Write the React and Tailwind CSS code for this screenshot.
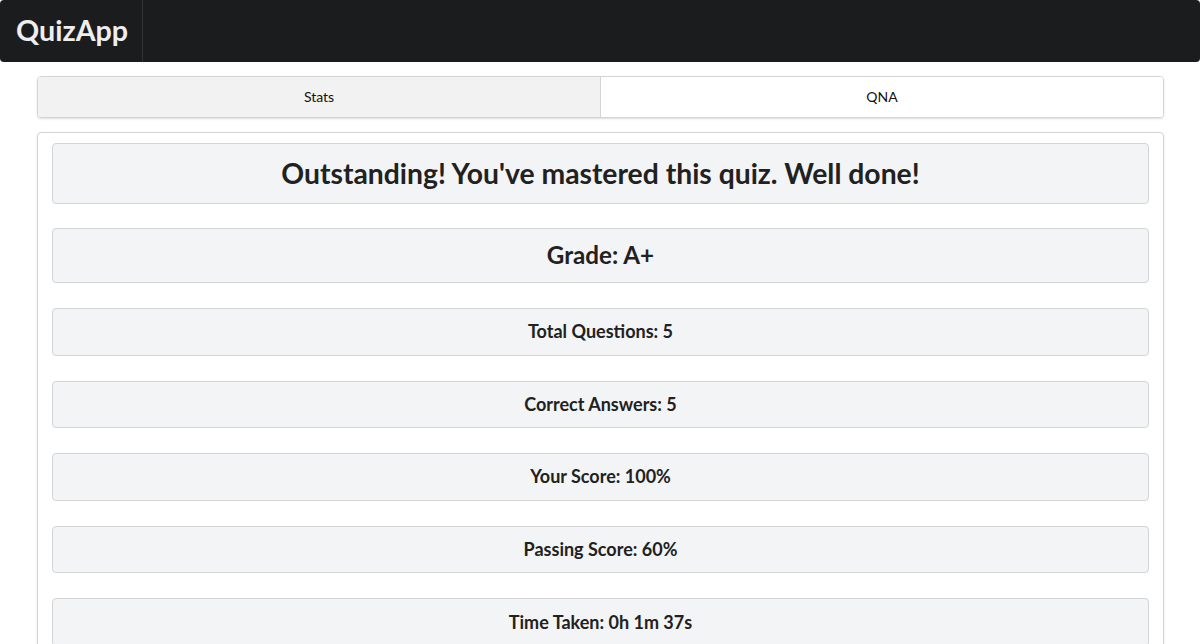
import React from 'react';

const stats = [
  { label: 'Total Questions: 5' },
  { label: 'Correct Answers: 5' },
  { label: 'Your Score: 100%' },
  { label: 'Passing Score: 60%' },
  { label: 'Time Taken: 0h 1m 37s' },
];

const StatRow = ({ children }) => (
  <div className="h-[47.6px] mt-[25px] flex items-center justify-center rounded-[4px] border border-[#d4d4d5] bg-[#f3f4f5] text-[18px] font-bold text-[#212121]">
    {children}
  </div>
);

const App = () => {
  return (
    <div className="min-h-[644px] bg-white font-['Lato','Liberation_Sans',sans-serif] text-[#212121]">
      {/* top bar */}
      <div className="h-[62px] flex bg-[#1b1c1d] rounded-[4px]">
        <div className="flex items-center px-4 border-r border-[#333435] w-[143px]">
          <span className="text-[28.7px] font-bold text-[#eeeeee]">QuizApp</span>
        </div>
      </div>

      <div className="ml-[37px] mr-[36px] mt-[14px]">
        {/* tabs */}
        <div className="flex h-[42px] rounded-[4px] border border-[#d4d4d5] shadow-[0_1px_2px_0_rgba(34,36,38,0.15)] overflow-hidden">
          <div className="flex-1 flex items-center justify-center pb-[1px] bg-[#f2f2f2] border-r border-[#d4d4d5] text-[14px] text-[#111]">
            Stats
          </div>
          <div className="flex-1 flex items-center justify-center pb-[1px] bg-white text-[14px] text-[#111]">
            QNA
          </div>
        </div>

        {/* results */}
        <div className="mt-[14px] rounded-[4px] border border-[#d4d4d5] shadow-[0_1px_2px_0_rgba(34,36,38,0.15)] px-[14px] pt-[10px] pb-[14px] flex flex-col">
          <div className="h-[61px] flex items-center justify-center rounded-[4px] border border-[#d4d4d5] bg-[#f3f4f5] text-[28.3px] font-bold">
            Outstanding! You've mastered this quiz. Well done!
          </div>
          <div className="h-[55px] mt-[24px] flex items-center justify-center rounded-[4px] border border-[#d4d4d5] bg-[#f3f4f5] text-[24.2px] font-bold">
            Grade: A+
          </div>
          {stats.map((s) => (
            <StatRow key={s.label}>{s.label}</StatRow>
          ))}
        </div>
      </div>
    </div>
  );
};

export default App;
